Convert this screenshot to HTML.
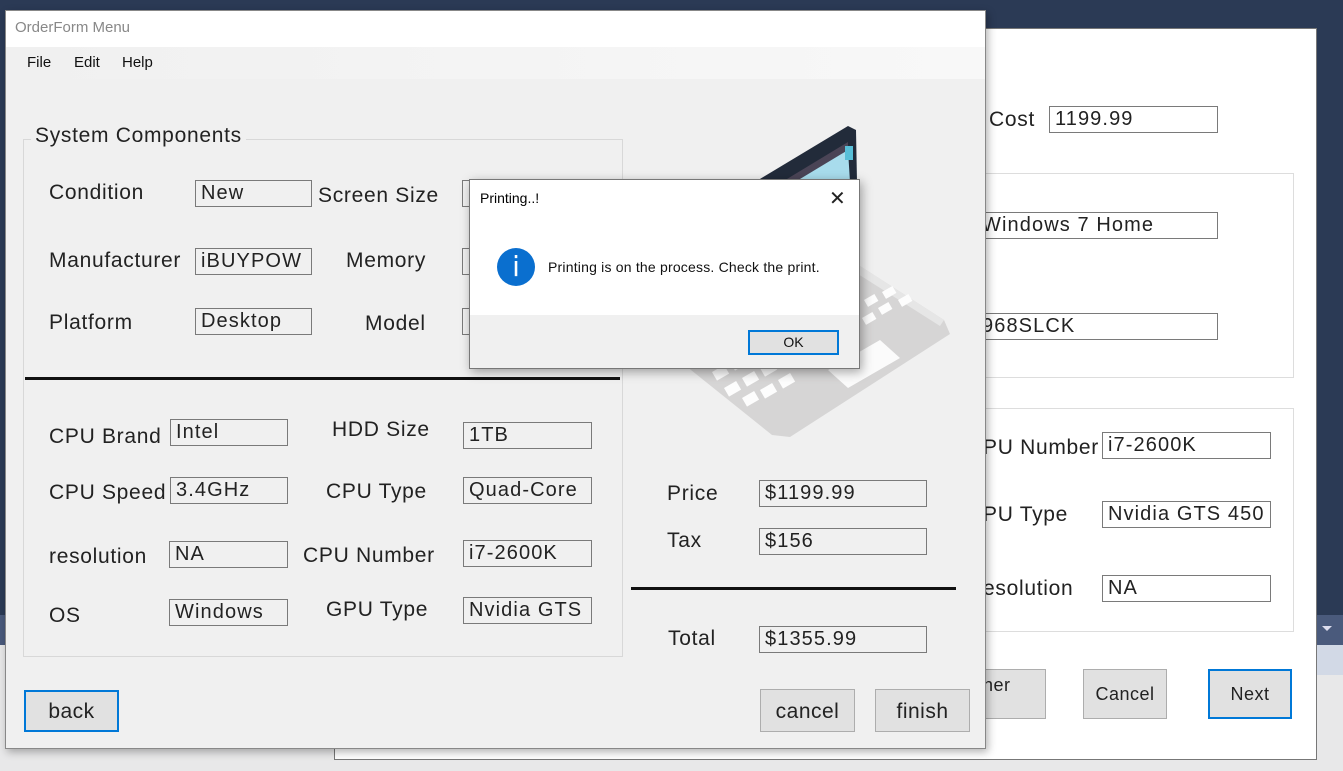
<!DOCTYPE html>
<html><head><meta charset="utf-8"><style>
*{margin:0;padding:0;box-sizing:border-box}
body{width:1343px;height:771px;position:relative;overflow:hidden;background:#e8e8e9;font-family:"Liberation Sans",sans-serif;color:#222}
.a{position:absolute}
.l{position:absolute;font-size:21px;white-space:nowrap;color:#222;letter-spacing:0.7px}
.b{position:absolute;border:1px solid #7a7a7a;font-size:20px;padding-left:5px;line-height:24px;white-space:nowrap;overflow:hidden;color:#222;letter-spacing:1.1px}
.btn{position:absolute;background:#e1e1e1;border:1px solid #adadad;font-size:21px;text-align:center;color:#222;letter-spacing:0.5px}
</style></head><body>
<div class="a" style="left:0;top:0;width:1343px;height:615px;background:#2b3a55"></div>
<div class="a" style="left:1316px;top:615px;width:27px;height:30px;background:#4a5a7c"></div>
<div class="a" style="left:1322px;top:626px;width:0;height:0;border-left:5px solid transparent;border-right:5px solid transparent;border-top:5px solid #dde"></div>
<div class="a" style="left:1316px;top:645px;width:27px;height:30px;background:#d2d9e6"></div>
<div class="a" style="left:0;top:615px;width:6px;height:30px;background:#4a5a7c"></div>

<!-- back window -->
<div class="a" style="left:334px;top:28px;width:983px;height:732px;background:#fff;border:1px solid #777"></div>
<div class="l" style="left:989px;top:108px">Cost</div>
<div class="b" style="left:1049px;top:106px;width:169px;height:27px;background:#fff">1199.99</div>
<div class="a" style="left:960px;top:173px;width:334px;height:205px;border:1px solid #ddd"></div>
<div class="b" style="left:960px;top:212px;width:258px;height:27px;border-left:none;padding-left:22px">Windows 7 Home</div>
<div class="b" style="left:960px;top:313px;width:258px;height:27px;border-left:none;padding-left:22px">968SLCK</div>
<div class="a" style="left:960px;top:408px;width:334px;height:224px;border:1px solid #ddd"></div>
<div class="l" style="left:983px;top:436px">PU Number</div>
<div class="b" style="left:1102px;top:432px;width:169px;height:27px">i7-2600K</div>
<div class="l" style="left:983px;top:503px">PU Type</div>
<div class="b" style="left:1102px;top:501px;width:169px;height:27px">Nvidia GTS 450</div>
<div class="l" style="left:983px;top:577px">esolution</div>
<div class="b" style="left:1102px;top:575px;width:169px;height:27px">NA</div>
<div class="btn" style="left:960px;top:669px;width:86px;height:50px;font-size:18px;line-height:30px;text-align:left;padding-left:22px">her</div>
<div class="btn" style="left:1083px;top:669px;width:84px;height:50px;font-size:18px;line-height:48px">Cancel</div>
<div class="btn" style="left:1208px;top:669px;width:84px;height:50px;font-size:18px;line-height:46px;border:2px solid #0078d7">Next</div>

<!-- front window -->
<div class="a" style="left:5px;top:10px;width:981px;height:739px;background:#f0f0f0;border:1px solid #888;box-shadow:2px 3px 8px rgba(0,0,0,.3)"></div>
<div class="a" style="left:6px;top:11px;width:979px;height:36px;background:#fff"></div>
<div class="a" style="left:15px;top:19px;font-size:15px;color:#888">OrderForm Menu</div>
<div class="a" style="left:6px;top:47px;width:979px;height:32px;background:linear-gradient(90deg,#f0f0f0,#f8f8f8)"></div>
<div class="a" style="left:27px;top:54px;font-size:15px;color:#111">File</div>
<div class="a" style="left:74px;top:54px;font-size:15px;color:#111">Edit</div>
<div class="a" style="left:122px;top:54px;font-size:15px;color:#111">Help</div>

<div class="a" style="left:23px;top:139px;width:600px;height:518px;border:1px solid #d8d8d8"></div>
<div class="l" style="left:31px;top:124px;background:#f0f0f0;padding:0 4px">System Components</div>
<div class="a" style="left:25px;top:377px;width:595px;height:3px;background:#111"></div>

<div class="l" style="left:49px;top:181px">Condition</div>
<div class="b" style="left:195px;top:180px;width:117px;height:27px">New</div>
<div class="l" style="left:318px;top:184px">Screen Size</div>
<div class="b" style="left:462px;top:180px;width:20px;height:27px"></div>
<div class="l" style="left:49px;top:249px">Manufacturer</div>
<div class="b" style="left:195px;top:248px;width:117px;height:27px">iBUYPOW</div>
<div class="l" style="left:346px;top:249px">Memory</div>
<div class="b" style="left:462px;top:248px;width:20px;height:27px"></div>
<div class="l" style="left:49px;top:311px">Platform</div>
<div class="b" style="left:195px;top:308px;width:117px;height:27px">Desktop</div>
<div class="l" style="left:365px;top:312px">Model</div>
<div class="b" style="left:462px;top:308px;width:20px;height:27px"></div>

<div class="l" style="left:49px;top:425px">CPU Brand</div>
<div class="b" style="left:170px;top:419px;width:118px;height:27px">Intel</div>
<div class="l" style="left:332px;top:418px">HDD Size</div>
<div class="b" style="left:463px;top:422px;width:129px;height:27px">1TB</div>
<div class="l" style="left:49px;top:481px">CPU Speed</div>
<div class="b" style="left:170px;top:477px;width:118px;height:27px">3.4GHz</div>
<div class="l" style="left:326px;top:480px">CPU Type</div>
<div class="b" style="left:463px;top:477px;width:129px;height:27px">Quad-Core</div>
<div class="l" style="left:49px;top:545px">resolution</div>
<div class="b" style="left:169px;top:541px;width:119px;height:27px">NA</div>
<div class="l" style="left:303px;top:544px">CPU Number</div>
<div class="b" style="left:463px;top:540px;width:129px;height:27px">i7-2600K</div>
<div class="l" style="left:49px;top:604px">OS</div>
<div class="b" style="left:169px;top:599px;width:119px;height:27px">Windows</div>
<div class="l" style="left:326px;top:598px">GPU Type</div>
<div class="b" style="left:463px;top:597px;width:129px;height:27px">Nvidia GTS</div>

<!-- laptop -->
<svg class="a" style="left:0;top:0" width="1000" height="460">
<polygon points="860,266 944,320 950,334 790,437 772,435 686,366 770,300" fill="#d6d5d5"/>
<polygon points="860,266 944,320 940,326 858,274" fill="#e6e6e6"/>
<polygon points="828,370 880,340 900,358 848,388" fill="#fbfbfb"/>
<g fill="#fdfdfd">
<rect x="712" y="372" width="14" height="10" transform="rotate(-30 712 372)"/>
<rect x="730" y="362" width="14" height="10" transform="rotate(-30 730 362)"/>
<rect x="748" y="352" width="14" height="10" transform="rotate(-30 748 352)"/>
<rect x="724" y="388" width="14" height="10" transform="rotate(-30 724 388)"/>
<rect x="742" y="378" width="14" height="10" transform="rotate(-30 742 378)"/>
<rect x="760" y="368" width="14" height="10" transform="rotate(-30 760 368)"/>
<rect x="742" y="398" width="14" height="10" transform="rotate(-30 742 398)"/>
<rect x="760" y="390" width="14" height="10" transform="rotate(-30 760 390)"/>
<rect x="778" y="380" width="14" height="10" transform="rotate(-30 778 380)"/>
<rect x="862" y="318" width="12" height="8" transform="rotate(-30 862 318)"/>
<rect x="878" y="308" width="12" height="8" transform="rotate(-30 878 308)"/>
<rect x="864" y="300" width="12" height="8" transform="rotate(-30 864 300)"/>
<rect x="882" y="292" width="12" height="8" transform="rotate(-30 882 292)"/>
<rect x="898" y="300" width="12" height="8" transform="rotate(-30 898 300)"/>
</g>
<polygon points="755,182 848,126 856,130 857,182" fill="#222b3a"/>
<polygon points="790,182 848,150 850,182" fill="#a8dcec"/>
<polygon points="782,182 848,142 848,150 795,182" fill="#4a4456"/>
<rect x="845" y="146" width="8" height="14" fill="#58bfd8"/>
</svg>

<div class="l" style="left:667px;top:482px">Price</div>
<div class="b" style="left:759px;top:480px;width:168px;height:27px">$1199.99</div>
<div class="l" style="left:667px;top:529px">Tax</div>
<div class="b" style="left:759px;top:528px;width:168px;height:27px">$156</div>
<div class="a" style="left:631px;top:587px;width:325px;height:3px;background:#111"></div>
<div class="l" style="left:668px;top:627px">Total</div>
<div class="b" style="left:759px;top:626px;width:168px;height:27px">$1355.99</div>

<div class="btn" style="left:24px;top:690px;width:95px;height:42px;border:2px solid #0078d7;line-height:40px">back</div>
<div class="btn" style="left:760px;top:689px;width:95px;height:43px;line-height:44px">cancel</div>
<div class="btn" style="left:875px;top:689px;width:95px;height:43px;line-height:44px">finish</div>

<!-- dialog -->
<div class="a" style="left:469px;top:179px;width:391px;height:190px;background:#fff;border:1px solid #777;box-shadow:2px 3px 10px rgba(0,0,0,.35)"></div>
<div class="a" style="left:470px;top:315px;width:389px;height:53px;background:#f0f0f0"></div>
<div class="a" style="left:480px;top:190px;font-size:14px;color:#000">Printing..!</div>
<div class="a" style="left:829px;top:186px;font-size:20px;color:#222;font-family:'DejaVu Sans',sans-serif">✕</div>
<div class="a" style="left:497px;top:248px;width:38px;height:38px;border-radius:50%;background:#0a6fcf;color:#fff;text-align:center;font-size:28px;line-height:38px;font-family:'DejaVu Sans',sans-serif">i</div>
<div class="a" style="left:548px;top:259px;font-size:14px;color:#111;letter-spacing:0.2px">Printing is on the process. Check the print.</div>
<div class="a" style="left:748px;top:330px;width:91px;height:25px;background:#e1e1e1;border:2px solid #0078d7;font-size:14px;text-align:center;line-height:21px;color:#111">OK</div>
</body></html>
